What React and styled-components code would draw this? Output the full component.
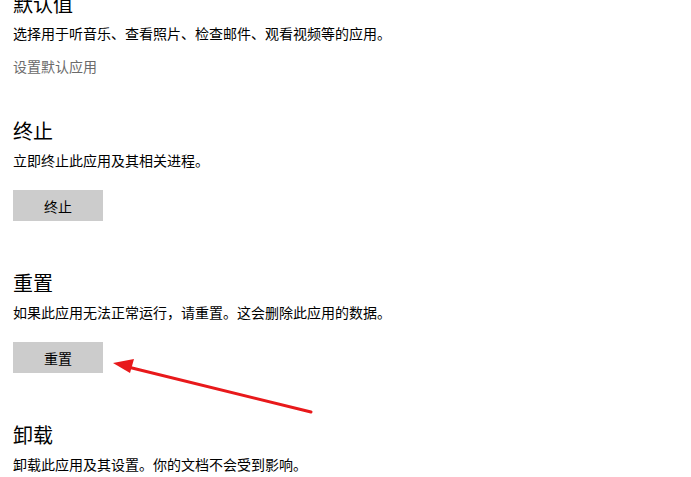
import React from 'react';
import styled, { createGlobalStyle } from 'styled-components';

const GlobalStyle = createGlobalStyle`
  html, body {
    margin: 0;
    padding: 0;
    background: #ffffff;
    overflow: hidden;
  }
  body {
    font-family: "Noto Sans CJK SC", "Noto Sans", sans-serif;
    color: #000000;
  }
`;

const Page = styled.div`
  position: relative;
  width: 691px;
  height: 477px;
  overflow: hidden;
`;

const Content = styled.div`
  display: flex;
  flex-direction: column;
  margin-top: -10px;
  padding-left: 13px;
`;

const Section = styled.section`
  display: flex;
  flex-direction: column;
  align-items: flex-start;
  margin-bottom: ${(p) => p.$spacing || 48}px;
`;

const Heading = styled.h2`
  margin: 0;
  font-size: 20px;
  line-height: 28px;
  font-weight: 400;
`;

const Description = styled.p`
  margin: 5px 0 0;
  font-size: 14px;
  line-height: 20px;
`;

const Link = styled.a`
  margin-top: 13px;
  font-size: 14px;
  line-height: 20px;
  color: #6b6b6b;
  text-decoration: none;
  cursor: pointer;
`;

const Button = styled.button`
  margin-top: 20px;
  width: 90px;
  height: 31px;
  padding: 0;
  border: none;
  background: #cccccc;
  font-family: inherit;
  font-size: 14px;
  color: #000000;
  cursor: pointer;
`;

const Arrow = styled.svg`
  position: absolute;
  left: 0;
  top: 0;
  pointer-events: none;
`;

function ArrowOverlay() {
  return (
    <Arrow width="691" height="477" viewBox="0 0 691 477">
      <line x1="311" y1="412" x2="128" y2="367" stroke="#e8191b" strokeWidth="3" strokeLinecap="round" />
      <polygon points="113,363 134,359 130,373" fill="#e8191b" />
    </Arrow>
  );
}

export default function App() {
  return (
    <Page>
      <GlobalStyle />
      <Content>
        <Section $spacing={41}>
          <Heading>默认值</Heading>
          <Description>选择用于听音乐、查看照片、检查邮件、观看视频等的应用。</Description>
          <Link>设置默认应用</Link>
        </Section>
        <Section>
          <Heading>终止</Heading>
          <Description>立即终止此应用及其相关进程。</Description>
          <Button>终止</Button>
        </Section>
        <Section>
          <Heading>重置</Heading>
          <Description>如果此应用无法正常运行，请重置。这会删除此应用的数据。</Description>
          <Button>重置</Button>
        </Section>
        <Section>
          <Heading>卸载</Heading>
          <Description>卸载此应用及其设置。你的文档不会受到影响。</Description>
        </Section>
      </Content>
      <ArrowOverlay />
    </Page>
  );
}
